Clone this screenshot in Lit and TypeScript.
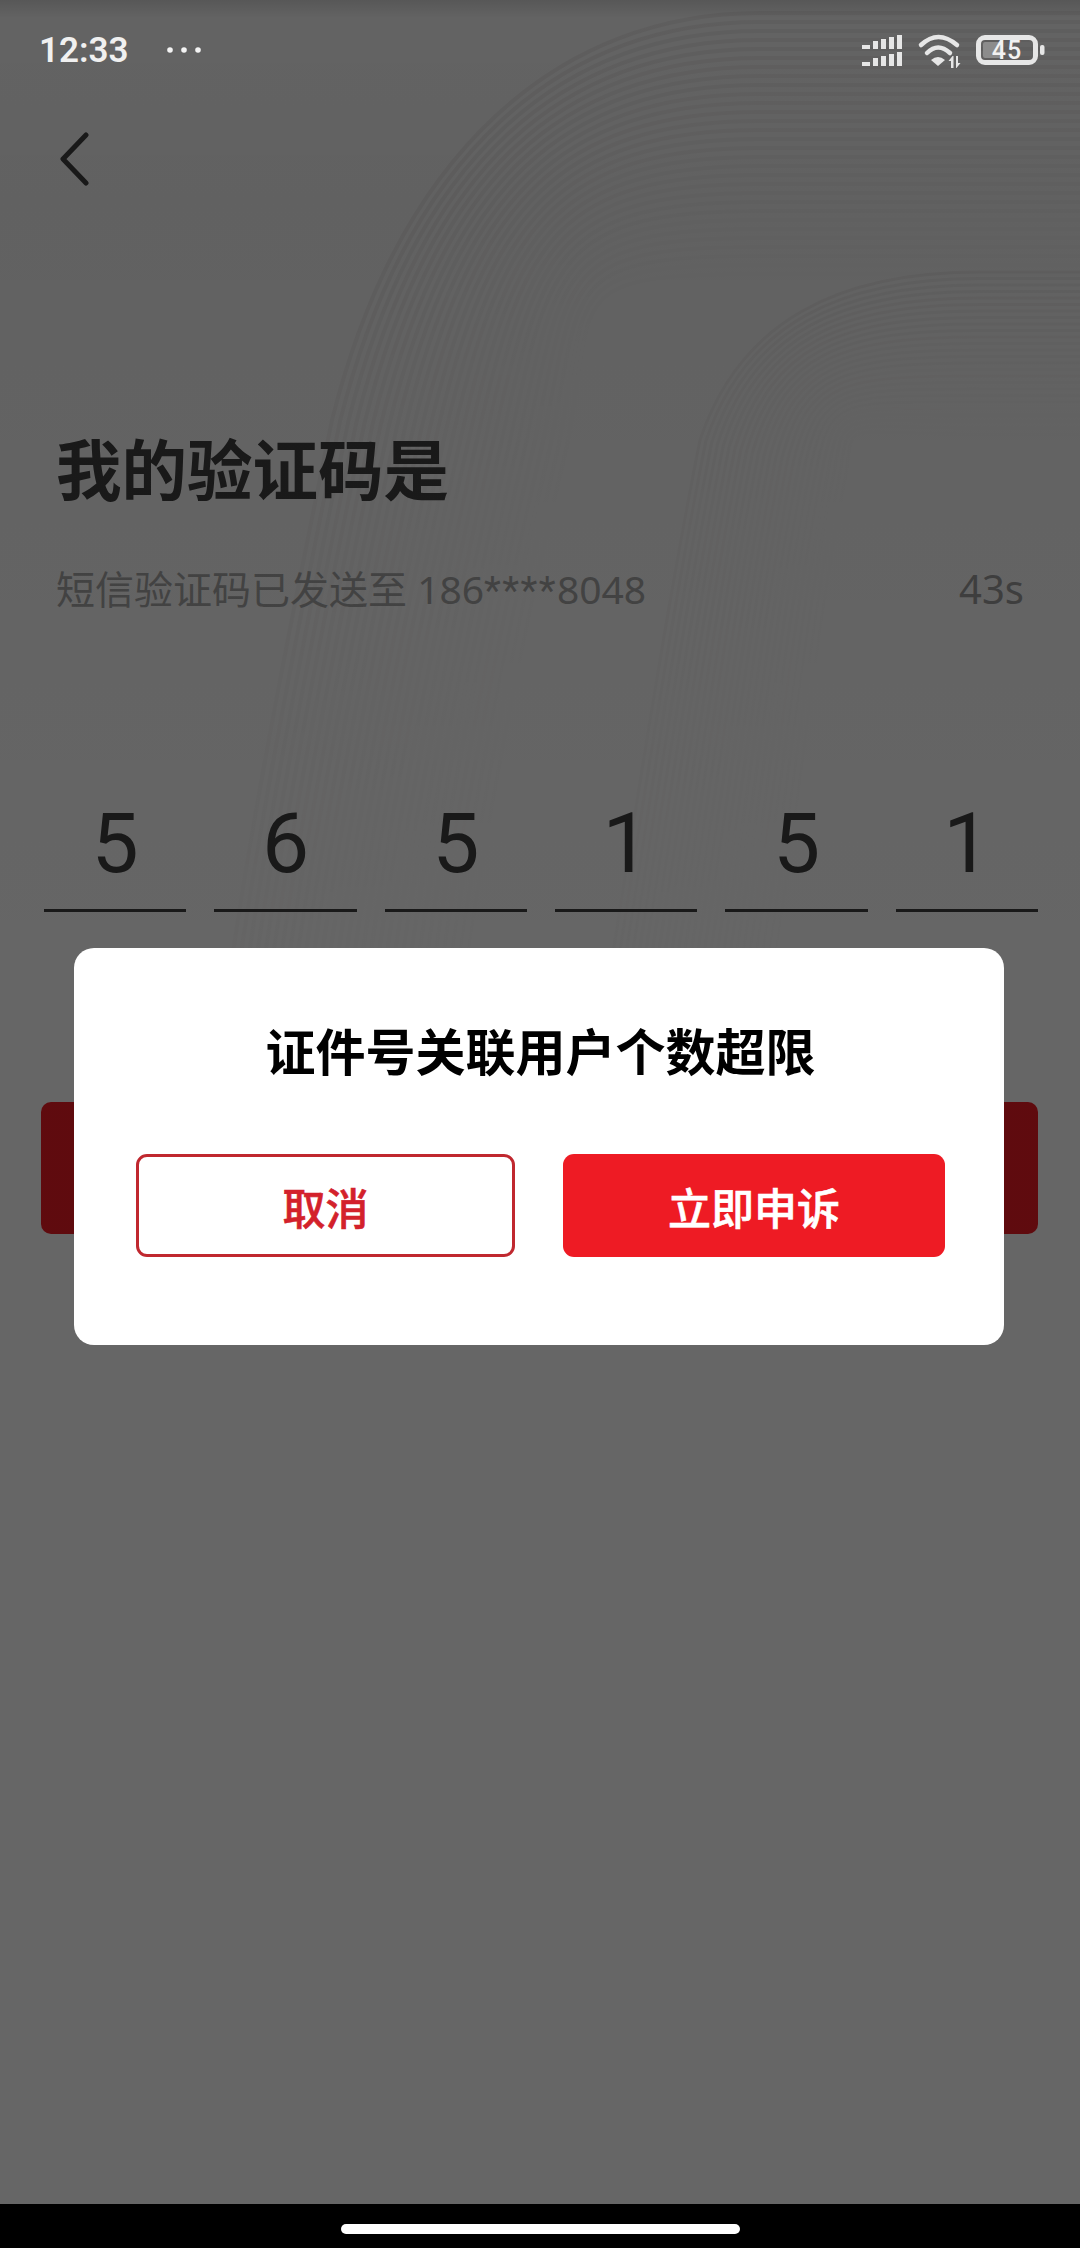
import { LitElement, html, css, svg } from "lit";
import { customElement } from "lit/decorators.js";

const outer = Array.from({ length: 30 }, (_, i) => {
  const y = 13 + i * 9;
  const s = i * 9;
  return {
    d: `M1080 ${y} L760 ${y} C560 ${y} ${400 + s * 0.75} ${150 + s * 0.55} ${332 + s * 0.9} ${420 + s * 0.1} C${295 + s * 0.9} 600 ${255 + s * 0.9} 800 ${232 + s * 0.9} 960`,
    o: 0.075 * (1 - i / 34),
  };
});

const inner = Array.from({ length: 26 }, (_, i) => {
  const y = 272 + i * 6.5;
  const s = i * 6.5;
  return {
    d: `M1080 ${y} L980 ${y} C840 ${y} ${740 + s * 0.7} ${320 + s * 0.6} ${700 + s * 0.9} ${440 + s * 0.2} C${670 + s * 0.9} ${590 + s * 0.2} ${640 + s} 780 ${612 + s} 960`,
    o: 0.065 * (1 - i / 30),
  };
});

@customElement("app-root")
export class AppRoot extends LitElement {
  static styles = css`
    :host {
      display: block;
      width: 1080px;
      height: 2248px;
      overflow: hidden;
      font-family: "Noto Sans CJK SC", "Noto Sans", sans-serif;
    }
    .page {
      position: relative;
      width: 1080px;
      height: 2248px;
      background: #000;
      display: flex;
      flex-direction: column;
    }
    .screen {
      position: relative;
      height: 2204px;
      background: #fff;
      overflow: hidden;
    }
    .pattern {
      position: absolute;
      left: 0;
      top: 0;
      -webkit-mask-image: linear-gradient(#000 0, #000 220px, rgba(0, 0, 0, 0.55) 500px, rgba(0, 0, 0, 0.22) 960px);
      mask-image: linear-gradient(#000 0, #000 220px, rgba(0, 0, 0, 0.55) 500px, rgba(0, 0, 0, 0.22) 960px);
    }
    .pattern path {
      fill: none;
      stroke: #5a4040;
      stroke-width: 4;
    }
    .pattern .fine {
      stroke-width: 3;
    }
    .content {
      position: relative;
      display: flex;
      flex-direction: column;
    }
    .back {
      display: block;
      margin: 132px 0 0 58px;
      width: 32px;
      height: 54px;
    }
    .title {
      margin: 243px 0 0 56px;
      font-size: 65.5px;
      line-height: 76px;
      font-weight: 700;
      color: #414141;
    }
    .sub {
      display: flex;
      justify-content: space-between;
      align-items: baseline;
      margin: 61px 56px 0 56px;
      font-family: "Noto Sans", "Noto Sans CJK SC", sans-serif;
      font-size: 39px;
      line-height: 46px;
      color: #aaa;
    }
    .sub .stars {
      font-family: Roboto, sans-serif;
      letter-spacing: 1.4px;
    }
    .sub .timer {
      color: #9e9e9e;
      font-size: 40px;
    }
    .code {
      display: grid;
      grid-template-columns: repeat(6, 1fr);
      column-gap: 28px;
      margin: 181px 42px 0 44px;
    }
    .cell {
      border-bottom: 3px solid #3e3e3e;
      height: 114px;
      box-sizing: content-box;
      text-align: center;
      font-family: Roboto, "Noto Sans", sans-serif;
      font-size: 84px;
      line-height: 98px;
      color: #3e3e3e;
    }
    .submit {
      margin: 190px 42px 0 41px;
      height: 132px;
      border-radius: 10px;
      background: #ee1b24;
    }
    .scrim {
      position: absolute;
      inset: 0;
      background: linear-gradient(rgba(0, 0, 0, 0.66), rgba(0, 0, 0, 0.61) 18px, rgba(0, 0, 0, 0.62) 200px, rgba(0, 0, 0, 0.6) 1000px);
    }
    .status {
      position: absolute;
      left: 0;
      right: 0;
      top: 0;
      height: 100px;
    }
    .status svg {
      position: absolute;
      left: 0;
      top: 0;
    }
    .time {
      position: absolute;
      left: 39px;
      top: 30px;
      font-family: Roboto, sans-serif;
      font-weight: 600;
      font-size: 35px;
      line-height: 42px;
      color: #f0f0f0;
    }
    .batt {
      position: absolute;
      left: 978px;
      top: 35px;
      width: 58px;
      height: 30px;
      text-align: center;
      font-family: Roboto, sans-serif;
      font-weight: 500;
      font-size: 25px;
      line-height: 31px;
      letter-spacing: 1px;
      color: #f2f2f2;
    }
    .dialog {
      position: absolute;
      left: 74px;
      top: 948px;
      width: 930px;
      height: 397px;
      box-sizing: border-box;
      background: #fff;
      border-radius: 20px;
      padding: 70px 59px 0 62px;
    }
    .dialog h2 {
      margin: 0;
      text-align: center;
      font-size: 50px;
      line-height: 62px;
      font-weight: 700;
      color: #000;
    }
    .btns {
      display: flex;
      justify-content: space-between;
      margin-top: 74px;
    }
    .btn {
      height: 103px;
      box-sizing: border-box;
      border-radius: 11px;
      display: flex;
      align-items: center;
      justify-content: center;
      font-size: 43px;
      font-weight: 500;
      -webkit-text-stroke: 0.6px currentColor;
    }
    .btn.ghost {
      width: 379px;
      border: 3px solid #c0282f;
      color: #d3212b;
      background: #fff;
    }
    .btn.solid {
      width: 382px;
      background: #ee1b24;
      color: #fff;
    }
    .navbar {
      flex: 1;
      display: flex;
      align-items: center;
      justify-content: center;
    }
    .pill {
      width: 399px;
      height: 10px;
      margin-top: 5px;
      border-radius: 5px;
      background: #fff;
    }
  `;

  render() {
    const code = ["5", "6", "5", "1", "5", "1"];
    return html`
      <div class="page">
        <div class="screen">
          <svg class="pattern" width="1080" height="960" viewBox="0 0 1080 960">
            ${outer.map((l) => svg`<path d=${l.d} opacity=${l.o}></path>`)}
            ${inner.map((l) => svg`<path class="fine" d=${l.d} opacity=${l.o}></path>`)}
          </svg>
          <div class="content">
            <svg class="back" viewBox="0 0 32 54">
              <path d="M28 3 L5 27 L28 51" fill="none" stroke="#414141" stroke-width="5" stroke-linecap="round" stroke-linejoin="round"></path>
            </svg>
            <div class="title">我的验证码是</div>
            <div class="sub"><span>短信验证码已发送至 186<span class="stars">****</span>8048</span><span class="timer">43s</span></div>
            <div class="code">${code.map((c) => html`<div class="cell">${c}</div>`)}</div>
            <div class="submit"></div>
          </div>
          <div class="scrim"></div>
          <div class="status">
            <div class="time">12:33</div>
            <svg width="1080" height="100" viewBox="0 0 1080 100" fill="#e6e6e6">
              <circle cx="170" cy="50" r="2.8" fill="#f4f4f4"></circle>
              <circle cx="184" cy="50" r="2.8" fill="#f4f4f4"></circle>
              <circle cx="198" cy="50" r="2.8" fill="#f4f4f4"></circle>
              <path d="M862 45h8v4h-8zM873 41h5v8h-5zM881 39h5v10h-5zM889 37h5v12h-5zM897 35h5v14h-5z"></path>
              <path d="M862 62h8v4h-8zM873 58h5v8h-5zM881 56h5v10h-5zM889 54h5v12h-5zM897 52h5v14h-5z"></path>
              <g fill="none" stroke="#e6e6e6" stroke-width="4.500" stroke-linecap="round">
                <path d="M921 45 Q938 29 957 45"></path>
                <path d="M927 53 Q938 42 950 53"></path>
              </g>
              <path d="M931 60 Q938 54 945 60 L938 66 Z"></path>
              <path d="M951 68v-7h-2.500l4-5h1v12zM956 56h2v7h2.500l-4 5h-.5z"></path>
              <rect x="978.500" y="37.500" width="57" height="25" rx="6.500" fill="none" stroke="#e6e6e6" stroke-width="5"></rect>
              <rect x="983" y="42" width="20" height="16" rx="2" fill="#8c8c8c"></rect>
              <rect x="1040" y="45" width="4.500" height="10" rx="2"></rect>
            </svg>
            <div class="batt">45</div>
          </div>
          <div class="dialog">
            <h2>证件号关联用户个数超限</h2>
            <div class="btns">
              <div class="btn ghost">取消</div>
              <div class="btn solid">立即申诉</div>
            </div>
          </div>
        </div>
        <div class="navbar"><div class="pill"></div></div>
      </div>
    `;
  }
}
